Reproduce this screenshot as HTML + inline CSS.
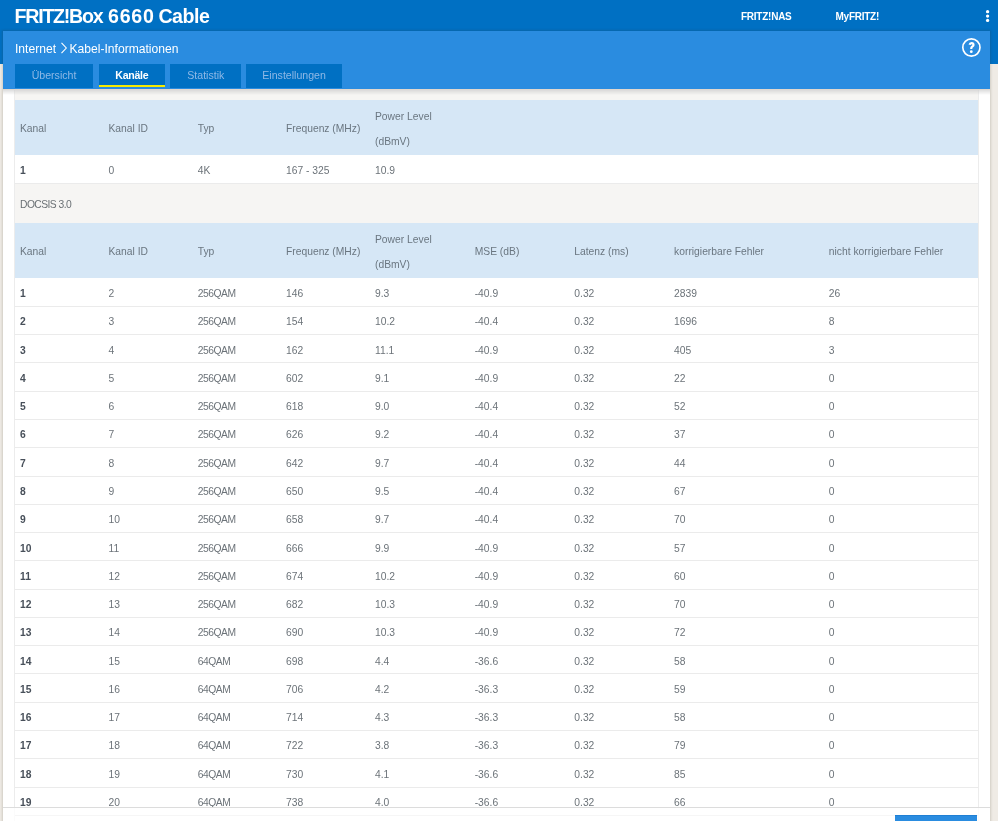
<!DOCTYPE html>
<html><head><meta charset="utf-8"><title>FRITZ!Box 6660 Cable</title>
<style>
html,body{margin:0;padding:0}
body{width:998px;height:821px;overflow:hidden;position:relative;background:#efebe5;font-family:"Liberation Sans",sans-serif}
#wrap{position:absolute;left:0;top:0;width:998px;height:821px;will-change:transform}
#top{position:absolute;left:0;top:0;width:998px;height:64px;background:#0070c3}
.title{position:absolute;left:14.6px;top:2px;font-size:19.6px;font-weight:bold;color:#fff;letter-spacing:-0.6px;line-height:28px;white-space:nowrap}
.tl{position:absolute;top:6.8px;font-size:10px;color:#fff;line-height:20px;white-space:nowrap;font-weight:bold;letter-spacing:-0.25px}
.dot{position:absolute;left:986px;width:3.2px;height:3.2px;border-radius:50%;background:#fff}
#panel{position:absolute;left:3px;top:31px;width:987px;height:800px;background:#fff;box-shadow:0 0 2px 1px rgba(60,50,30,0.16)}
#sub{position:absolute;left:3px;top:31px;width:987px;height:58px;background:#2a8ce0}
#crumb{position:absolute;left:15px;top:41px;font-size:12.1px;color:#fff;line-height:16px;white-space:nowrap}
.tab{position:absolute;top:64px;height:24px;background:#0070c3;color:#8fb9e6;font-size:10.6px;line-height:23px;text-align:center;white-space:nowrap}
.tab.act{color:#fff;font-weight:bold;letter-spacing:-0.3px}
#shadow{position:absolute;left:3px;top:89px;width:987px;height:6px;background:linear-gradient(#e2d8cf 0,#e2d8cf 1px,rgba(200,200,200,0.6) 1px,rgba(230,230,230,0) 6px)}
#tbl{position:absolute;left:0;top:0;width:998px;height:821px;will-change:transform}
.sec{position:absolute;left:15px;width:963px;background:#f6f5f3}
.hd{position:absolute;left:15px;width:963px;background:#d6e7f6}
.ln{position:absolute;left:15px;width:963px;height:1px;background:#ebebeb}
.vb{position:absolute;top:88px;width:1px;height:733px;background:#ececec}
.c{position:absolute;white-space:nowrap;font-size:10.3px;color:#5f6a74}
.c.h{line-height:14px;color:#6a7680}
.c.pl{line-height:24.5px}
.c.d{color:#6c7379}
.c.b{font-weight:bold;color:#48505a}
.c.q{letter-spacing:-0.45px}
.c.sect{color:#6a7074;letter-spacing:-0.55px}
#footer{position:absolute;left:3px;top:807px;width:987px;height:14px;background:rgba(255,255,255,0.8);border-top:1px solid #dcdcdc}
#btn{position:absolute;left:895px;top:814.6px;width:82px;height:10px;background:#2a8ce0;border-top:1px solid #1f7fd4}
</style></head><body>
<div id="wrap">
<div id="top">
  <div class="title" style="left:14.6px;letter-spacing:-1.25px">FRITZ!Box</div><div class="title" style="left:108px;letter-spacing:0.75px">6660</div><div class="title" style="left:158.4px;letter-spacing:-0.45px">Cable</div>
  <div class="tl" style="left:741px">FRITZ!NAS</div>
  <div class="tl" style="left:835.5px">MyFRITZ!</div>
  <svg style="position:absolute;left:980px;top:5px" width="16" height="22" viewBox="980 5 16 22"><circle cx="987.6" cy="11.7" r="1.65" fill="#fff"/><circle cx="987.6" cy="16.05" r="1.65" fill="#fff"/><circle cx="987.6" cy="20.4" r="1.65" fill="#fff"/></svg>
</div>
<div id="panel"></div>
<div id="tbl">
<div class="vb" style="left:14px"></div><div class="vb" style="left:978px"></div><div class="sec" style="top:88px;height:12px"></div>
<div class="hd" style="top:100px;height:55px"></div>
<div class="c h" style="left:20px;top:122px">Kanal</div>
<div class="c h" style="left:108.5px;top:122px">Kanal ID</div>
<div class="c h" style="left:197.7px;top:122px">Typ</div>
<div class="c h" style="left:286px;top:122px">Frequenz (MHz)</div>
<div class="c h pl" style="left:375px;top:105px">Power Level<br>(dBmV)</div>
<div class="c d b" style="left:20px;top:157px;height:28px;line-height:28px">1</div><div class="c d" style="left:108.5px;top:157px;height:28px;line-height:28px">0</div><div class="c d" style="left:197.7px;top:157px;height:28px;line-height:28px">4K</div><div class="c d" style="left:286px;top:157px;height:28px;line-height:28px">167 - 325</div><div class="c d" style="left:375px;top:157px;height:28px;line-height:28px">10.9</div>
<div class="sec" style="top:183px;height:40px"></div><div class="ln" style="top:183px"></div>
<div class="c h sect" style="left:20px;top:198px">DOCSIS 3.0</div>
<div class="hd" style="top:223px;height:55px"></div>
<div class="c h" style="left:20px;top:245px">Kanal</div>
<div class="c h" style="left:108.5px;top:245px">Kanal ID</div>
<div class="c h" style="left:197.7px;top:245px">Typ</div>
<div class="c h" style="left:286px;top:245px">Frequenz (MHz)</div>
<div class="c h" style="left:474.7px;top:245px">MSE (dB)</div>
<div class="c h" style="left:574.3px;top:245px">Latenz (ms)</div>
<div class="c h" style="left:674.1px;top:245px">korrigierbare Fehler</div>
<div class="c h" style="left:828.8px;top:245px">nicht korrigierbare Fehler</div>
<div class="c h pl" style="left:375px;top:228px">Power Level<br>(dBmV)</div>
<div class="c d b" style="left:20px;top:280.0px;height:28px;line-height:28px">1</div><div class="c d" style="left:108.5px;top:280.0px;height:28px;line-height:28px">2</div><div class="c d q" style="left:197.7px;top:280.0px;height:28px;line-height:28px">256QAM</div><div class="c d" style="left:286px;top:280.0px;height:28px;line-height:28px">146</div><div class="c d" style="left:375px;top:280.0px;height:28px;line-height:28px">9.3</div><div class="c d" style="left:474.7px;top:280.0px;height:28px;line-height:28px">-40.9</div><div class="c d" style="left:574.3px;top:280.0px;height:28px;line-height:28px">0.32</div><div class="c d" style="left:674.1px;top:280.0px;height:28px;line-height:28px">2839</div><div class="c d" style="left:828.8px;top:280.0px;height:28px;line-height:28px">26</div>
<div class="ln" style="top:306px"></div>
<div class="c d b" style="left:20px;top:308.28px;height:28px;line-height:28px">2</div><div class="c d" style="left:108.5px;top:308.28px;height:28px;line-height:28px">3</div><div class="c d q" style="left:197.7px;top:308.28px;height:28px;line-height:28px">256QAM</div><div class="c d" style="left:286px;top:308.28px;height:28px;line-height:28px">154</div><div class="c d" style="left:375px;top:308.28px;height:28px;line-height:28px">10.2</div><div class="c d" style="left:474.7px;top:308.28px;height:28px;line-height:28px">-40.4</div><div class="c d" style="left:574.3px;top:308.28px;height:28px;line-height:28px">0.32</div><div class="c d" style="left:674.1px;top:308.28px;height:28px;line-height:28px">1696</div><div class="c d" style="left:828.8px;top:308.28px;height:28px;line-height:28px">8</div>
<div class="ln" style="top:334px"></div>
<div class="c d b" style="left:20px;top:336.56px;height:28px;line-height:28px">3</div><div class="c d" style="left:108.5px;top:336.56px;height:28px;line-height:28px">4</div><div class="c d q" style="left:197.7px;top:336.56px;height:28px;line-height:28px">256QAM</div><div class="c d" style="left:286px;top:336.56px;height:28px;line-height:28px">162</div><div class="c d" style="left:375px;top:336.56px;height:28px;line-height:28px">11.1</div><div class="c d" style="left:474.7px;top:336.56px;height:28px;line-height:28px">-40.9</div><div class="c d" style="left:574.3px;top:336.56px;height:28px;line-height:28px">0.32</div><div class="c d" style="left:674.1px;top:336.56px;height:28px;line-height:28px">405</div><div class="c d" style="left:828.8px;top:336.56px;height:28px;line-height:28px">3</div>
<div class="ln" style="top:362px"></div>
<div class="c d b" style="left:20px;top:364.84px;height:28px;line-height:28px">4</div><div class="c d" style="left:108.5px;top:364.84px;height:28px;line-height:28px">5</div><div class="c d q" style="left:197.7px;top:364.84px;height:28px;line-height:28px">256QAM</div><div class="c d" style="left:286px;top:364.84px;height:28px;line-height:28px">602</div><div class="c d" style="left:375px;top:364.84px;height:28px;line-height:28px">9.1</div><div class="c d" style="left:474.7px;top:364.84px;height:28px;line-height:28px">-40.9</div><div class="c d" style="left:574.3px;top:364.84px;height:28px;line-height:28px">0.32</div><div class="c d" style="left:674.1px;top:364.84px;height:28px;line-height:28px">22</div><div class="c d" style="left:828.8px;top:364.84px;height:28px;line-height:28px">0</div>
<div class="ln" style="top:391px"></div>
<div class="c d b" style="left:20px;top:393.12px;height:28px;line-height:28px">5</div><div class="c d" style="left:108.5px;top:393.12px;height:28px;line-height:28px">6</div><div class="c d q" style="left:197.7px;top:393.12px;height:28px;line-height:28px">256QAM</div><div class="c d" style="left:286px;top:393.12px;height:28px;line-height:28px">618</div><div class="c d" style="left:375px;top:393.12px;height:28px;line-height:28px">9.0</div><div class="c d" style="left:474.7px;top:393.12px;height:28px;line-height:28px">-40.4</div><div class="c d" style="left:574.3px;top:393.12px;height:28px;line-height:28px">0.32</div><div class="c d" style="left:674.1px;top:393.12px;height:28px;line-height:28px">52</div><div class="c d" style="left:828.8px;top:393.12px;height:28px;line-height:28px">0</div>
<div class="ln" style="top:419px"></div>
<div class="c d b" style="left:20px;top:421.4px;height:28px;line-height:28px">6</div><div class="c d" style="left:108.5px;top:421.4px;height:28px;line-height:28px">7</div><div class="c d q" style="left:197.7px;top:421.4px;height:28px;line-height:28px">256QAM</div><div class="c d" style="left:286px;top:421.4px;height:28px;line-height:28px">626</div><div class="c d" style="left:375px;top:421.4px;height:28px;line-height:28px">9.2</div><div class="c d" style="left:474.7px;top:421.4px;height:28px;line-height:28px">-40.4</div><div class="c d" style="left:574.3px;top:421.4px;height:28px;line-height:28px">0.32</div><div class="c d" style="left:674.1px;top:421.4px;height:28px;line-height:28px">37</div><div class="c d" style="left:828.8px;top:421.4px;height:28px;line-height:28px">0</div>
<div class="ln" style="top:447px"></div>
<div class="c d b" style="left:20px;top:449.68px;height:28px;line-height:28px">7</div><div class="c d" style="left:108.5px;top:449.68px;height:28px;line-height:28px">8</div><div class="c d q" style="left:197.7px;top:449.68px;height:28px;line-height:28px">256QAM</div><div class="c d" style="left:286px;top:449.68px;height:28px;line-height:28px">642</div><div class="c d" style="left:375px;top:449.68px;height:28px;line-height:28px">9.7</div><div class="c d" style="left:474.7px;top:449.68px;height:28px;line-height:28px">-40.4</div><div class="c d" style="left:574.3px;top:449.68px;height:28px;line-height:28px">0.32</div><div class="c d" style="left:674.1px;top:449.68px;height:28px;line-height:28px">44</div><div class="c d" style="left:828.8px;top:449.68px;height:28px;line-height:28px">0</div>
<div class="ln" style="top:476px"></div>
<div class="c d b" style="left:20px;top:477.96px;height:28px;line-height:28px">8</div><div class="c d" style="left:108.5px;top:477.96px;height:28px;line-height:28px">9</div><div class="c d q" style="left:197.7px;top:477.96px;height:28px;line-height:28px">256QAM</div><div class="c d" style="left:286px;top:477.96px;height:28px;line-height:28px">650</div><div class="c d" style="left:375px;top:477.96px;height:28px;line-height:28px">9.5</div><div class="c d" style="left:474.7px;top:477.96px;height:28px;line-height:28px">-40.4</div><div class="c d" style="left:574.3px;top:477.96px;height:28px;line-height:28px">0.32</div><div class="c d" style="left:674.1px;top:477.96px;height:28px;line-height:28px">67</div><div class="c d" style="left:828.8px;top:477.96px;height:28px;line-height:28px">0</div>
<div class="ln" style="top:504px"></div>
<div class="c d b" style="left:20px;top:506.24px;height:28px;line-height:28px">9</div><div class="c d" style="left:108.5px;top:506.24px;height:28px;line-height:28px">10</div><div class="c d q" style="left:197.7px;top:506.24px;height:28px;line-height:28px">256QAM</div><div class="c d" style="left:286px;top:506.24px;height:28px;line-height:28px">658</div><div class="c d" style="left:375px;top:506.24px;height:28px;line-height:28px">9.7</div><div class="c d" style="left:474.7px;top:506.24px;height:28px;line-height:28px">-40.4</div><div class="c d" style="left:574.3px;top:506.24px;height:28px;line-height:28px">0.32</div><div class="c d" style="left:674.1px;top:506.24px;height:28px;line-height:28px">70</div><div class="c d" style="left:828.8px;top:506.24px;height:28px;line-height:28px">0</div>
<div class="ln" style="top:532px"></div>
<div class="c d b" style="left:20px;top:534.52px;height:28px;line-height:28px">10</div><div class="c d" style="left:108.5px;top:534.52px;height:28px;line-height:28px">11</div><div class="c d q" style="left:197.7px;top:534.52px;height:28px;line-height:28px">256QAM</div><div class="c d" style="left:286px;top:534.52px;height:28px;line-height:28px">666</div><div class="c d" style="left:375px;top:534.52px;height:28px;line-height:28px">9.9</div><div class="c d" style="left:474.7px;top:534.52px;height:28px;line-height:28px">-40.9</div><div class="c d" style="left:574.3px;top:534.52px;height:28px;line-height:28px">0.32</div><div class="c d" style="left:674.1px;top:534.52px;height:28px;line-height:28px">57</div><div class="c d" style="left:828.8px;top:534.52px;height:28px;line-height:28px">0</div>
<div class="ln" style="top:560px"></div>
<div class="c d b" style="left:20px;top:562.8px;height:28px;line-height:28px">11</div><div class="c d" style="left:108.5px;top:562.8px;height:28px;line-height:28px">12</div><div class="c d q" style="left:197.7px;top:562.8px;height:28px;line-height:28px">256QAM</div><div class="c d" style="left:286px;top:562.8px;height:28px;line-height:28px">674</div><div class="c d" style="left:375px;top:562.8px;height:28px;line-height:28px">10.2</div><div class="c d" style="left:474.7px;top:562.8px;height:28px;line-height:28px">-40.9</div><div class="c d" style="left:574.3px;top:562.8px;height:28px;line-height:28px">0.32</div><div class="c d" style="left:674.1px;top:562.8px;height:28px;line-height:28px">60</div><div class="c d" style="left:828.8px;top:562.8px;height:28px;line-height:28px">0</div>
<div class="ln" style="top:589px"></div>
<div class="c d b" style="left:20px;top:591.08px;height:28px;line-height:28px">12</div><div class="c d" style="left:108.5px;top:591.08px;height:28px;line-height:28px">13</div><div class="c d q" style="left:197.7px;top:591.08px;height:28px;line-height:28px">256QAM</div><div class="c d" style="left:286px;top:591.08px;height:28px;line-height:28px">682</div><div class="c d" style="left:375px;top:591.08px;height:28px;line-height:28px">10.3</div><div class="c d" style="left:474.7px;top:591.08px;height:28px;line-height:28px">-40.9</div><div class="c d" style="left:574.3px;top:591.08px;height:28px;line-height:28px">0.32</div><div class="c d" style="left:674.1px;top:591.08px;height:28px;line-height:28px">70</div><div class="c d" style="left:828.8px;top:591.08px;height:28px;line-height:28px">0</div>
<div class="ln" style="top:617px"></div>
<div class="c d b" style="left:20px;top:619.36px;height:28px;line-height:28px">13</div><div class="c d" style="left:108.5px;top:619.36px;height:28px;line-height:28px">14</div><div class="c d q" style="left:197.7px;top:619.36px;height:28px;line-height:28px">256QAM</div><div class="c d" style="left:286px;top:619.36px;height:28px;line-height:28px">690</div><div class="c d" style="left:375px;top:619.36px;height:28px;line-height:28px">10.3</div><div class="c d" style="left:474.7px;top:619.36px;height:28px;line-height:28px">-40.9</div><div class="c d" style="left:574.3px;top:619.36px;height:28px;line-height:28px">0.32</div><div class="c d" style="left:674.1px;top:619.36px;height:28px;line-height:28px">72</div><div class="c d" style="left:828.8px;top:619.36px;height:28px;line-height:28px">0</div>
<div class="ln" style="top:645px"></div>
<div class="c d b" style="left:20px;top:647.64px;height:28px;line-height:28px">14</div><div class="c d" style="left:108.5px;top:647.64px;height:28px;line-height:28px">15</div><div class="c d q" style="left:197.7px;top:647.64px;height:28px;line-height:28px">64QAM</div><div class="c d" style="left:286px;top:647.64px;height:28px;line-height:28px">698</div><div class="c d" style="left:375px;top:647.64px;height:28px;line-height:28px">4.4</div><div class="c d" style="left:474.7px;top:647.64px;height:28px;line-height:28px">-36.6</div><div class="c d" style="left:574.3px;top:647.64px;height:28px;line-height:28px">0.32</div><div class="c d" style="left:674.1px;top:647.64px;height:28px;line-height:28px">58</div><div class="c d" style="left:828.8px;top:647.64px;height:28px;line-height:28px">0</div>
<div class="ln" style="top:673px"></div>
<div class="c d b" style="left:20px;top:675.92px;height:28px;line-height:28px">15</div><div class="c d" style="left:108.5px;top:675.92px;height:28px;line-height:28px">16</div><div class="c d q" style="left:197.7px;top:675.92px;height:28px;line-height:28px">64QAM</div><div class="c d" style="left:286px;top:675.92px;height:28px;line-height:28px">706</div><div class="c d" style="left:375px;top:675.92px;height:28px;line-height:28px">4.2</div><div class="c d" style="left:474.7px;top:675.92px;height:28px;line-height:28px">-36.3</div><div class="c d" style="left:574.3px;top:675.92px;height:28px;line-height:28px">0.32</div><div class="c d" style="left:674.1px;top:675.92px;height:28px;line-height:28px">59</div><div class="c d" style="left:828.8px;top:675.92px;height:28px;line-height:28px">0</div>
<div class="ln" style="top:702px"></div>
<div class="c d b" style="left:20px;top:704.2px;height:28px;line-height:28px">16</div><div class="c d" style="left:108.5px;top:704.2px;height:28px;line-height:28px">17</div><div class="c d q" style="left:197.7px;top:704.2px;height:28px;line-height:28px">64QAM</div><div class="c d" style="left:286px;top:704.2px;height:28px;line-height:28px">714</div><div class="c d" style="left:375px;top:704.2px;height:28px;line-height:28px">4.3</div><div class="c d" style="left:474.7px;top:704.2px;height:28px;line-height:28px">-36.3</div><div class="c d" style="left:574.3px;top:704.2px;height:28px;line-height:28px">0.32</div><div class="c d" style="left:674.1px;top:704.2px;height:28px;line-height:28px">58</div><div class="c d" style="left:828.8px;top:704.2px;height:28px;line-height:28px">0</div>
<div class="ln" style="top:730px"></div>
<div class="c d b" style="left:20px;top:732.48px;height:28px;line-height:28px">17</div><div class="c d" style="left:108.5px;top:732.48px;height:28px;line-height:28px">18</div><div class="c d q" style="left:197.7px;top:732.48px;height:28px;line-height:28px">64QAM</div><div class="c d" style="left:286px;top:732.48px;height:28px;line-height:28px">722</div><div class="c d" style="left:375px;top:732.48px;height:28px;line-height:28px">3.8</div><div class="c d" style="left:474.7px;top:732.48px;height:28px;line-height:28px">-36.3</div><div class="c d" style="left:574.3px;top:732.48px;height:28px;line-height:28px">0.32</div><div class="c d" style="left:674.1px;top:732.48px;height:28px;line-height:28px">79</div><div class="c d" style="left:828.8px;top:732.48px;height:28px;line-height:28px">0</div>
<div class="ln" style="top:758px"></div>
<div class="c d b" style="left:20px;top:760.76px;height:28px;line-height:28px">18</div><div class="c d" style="left:108.5px;top:760.76px;height:28px;line-height:28px">19</div><div class="c d q" style="left:197.7px;top:760.76px;height:28px;line-height:28px">64QAM</div><div class="c d" style="left:286px;top:760.76px;height:28px;line-height:28px">730</div><div class="c d" style="left:375px;top:760.76px;height:28px;line-height:28px">4.1</div><div class="c d" style="left:474.7px;top:760.76px;height:28px;line-height:28px">-36.6</div><div class="c d" style="left:574.3px;top:760.76px;height:28px;line-height:28px">0.32</div><div class="c d" style="left:674.1px;top:760.76px;height:28px;line-height:28px">85</div><div class="c d" style="left:828.8px;top:760.76px;height:28px;line-height:28px">0</div>
<div class="ln" style="top:787px"></div>
<div class="c d b" style="left:20px;top:789.04px;height:28px;line-height:28px">19</div><div class="c d" style="left:108.5px;top:789.04px;height:28px;line-height:28px">20</div><div class="c d q" style="left:197.7px;top:789.04px;height:28px;line-height:28px">64QAM</div><div class="c d" style="left:286px;top:789.04px;height:28px;line-height:28px">738</div><div class="c d" style="left:375px;top:789.04px;height:28px;line-height:28px">4.0</div><div class="c d" style="left:474.7px;top:789.04px;height:28px;line-height:28px">-36.6</div><div class="c d" style="left:574.3px;top:789.04px;height:28px;line-height:28px">0.32</div><div class="c d" style="left:674.1px;top:789.04px;height:28px;line-height:28px">66</div><div class="c d" style="left:828.8px;top:789.04px;height:28px;line-height:28px">0</div>
</div>
<div id="sub">
</div>
<div id="crumb">Internet <svg width="9" height="12" viewBox="0 0 9 12" style="vertical-align:-1px;margin-left:1px;margin-right:-3.2px"><path d="M1.5 0.8 L6.3 6 L1.5 11.2" fill="none" stroke="#fff" stroke-width="1.1"/></svg> Kabel-Informationen</div>
<svg style="position:absolute;left:961px;top:37px" width="21" height="21" viewBox="0 0 21 21">
  <circle cx="10.4" cy="10.5" r="8.6" fill="none" stroke="#fff" stroke-width="1.65"/>
  <path d="M8.6 7.8 C8.8 6.7 9.6 6.1 10.6 6.1 C11.8 6.1 12.5 6.9 12.5 7.9 C12.5 9.2 10.3 9.5 10.3 11.1 L10.3 12" fill="none" stroke="#fff" stroke-width="2.2"/>
  <circle cx="10.3" cy="14.7" r="1.4" fill="#fff"/>
</svg>
<div class="tab" style="left:15px;width:78px">Übersicht</div>
<div class="tab act" style="left:98.7px;width:66.3px;height:23px"><div style="position:absolute;left:0;right:0;top:21px;height:2px;background:#f5ea00"></div>Kanäle</div>
<div class="tab" style="left:170.4px;width:70.8px">Statistik</div>
<div class="tab" style="left:246.2px;width:95.8px">Einstellungen</div>
<div id="shadow"></div>
<div id="footer"></div><div style="position:absolute;left:15px;top:815px;width:963px;height:1px;background:#f6f6f6"></div>
<div id="btn"></div>
</div>
</body></html>
